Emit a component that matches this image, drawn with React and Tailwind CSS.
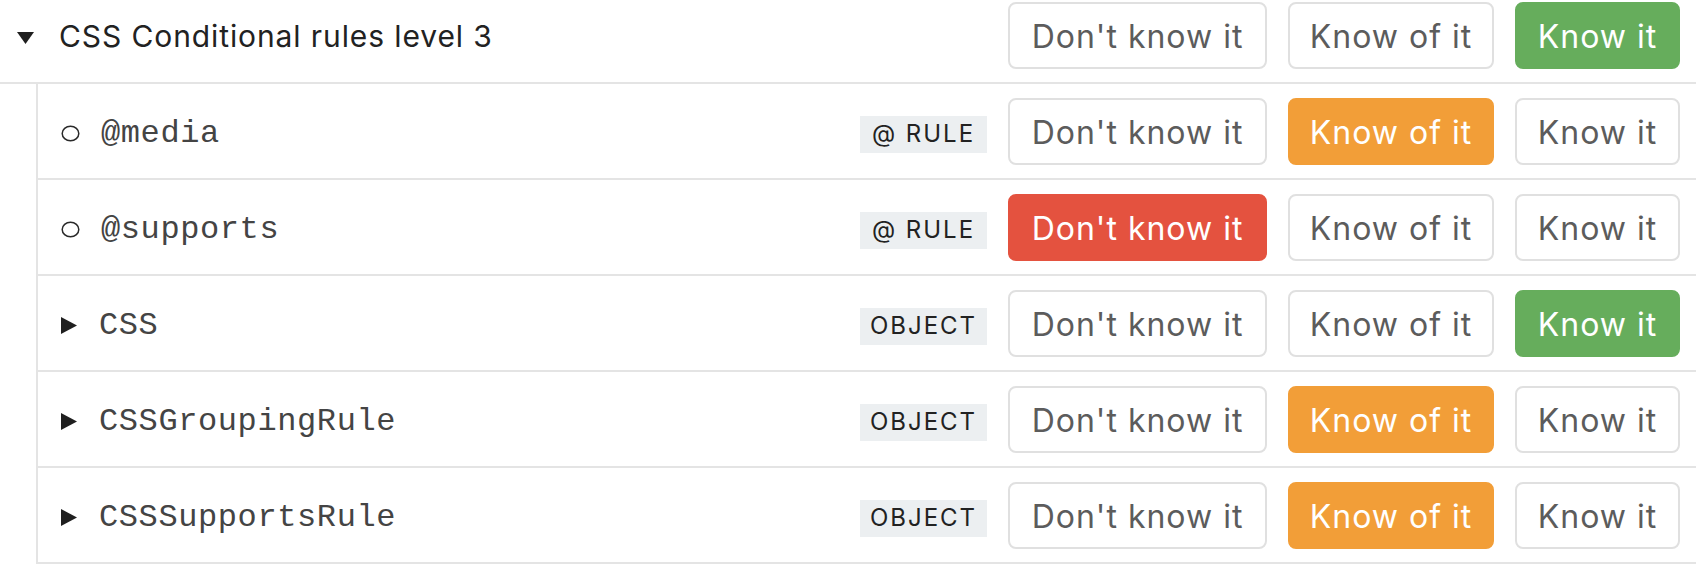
import React from 'react';

const rows = [
  { name: '@media', kind: 'leaf', tag: '@ RULE', state: 'of' },
  { name: '@supports', kind: 'leaf', tag: '@ RULE', state: 'dont' },
  { name: 'CSS', kind: 'closed', tag: 'OBJECT', state: 'know' },
  { name: 'CSSGroupingRule', kind: 'closed', tag: 'OBJECT', state: 'of' },
  { name: 'CSSSupportsRule', kind: 'closed', tag: 'OBJECT', state: 'of' },
];

const Choices = ({ state }) => {
  const base =
    'h-[67px] pt-[3px] rounded-[8px] border-2 text-[32px] tracking-[1px] flex items-center justify-center';
  const idle = 'border-[#e0e0e0] bg-white text-[#5c5c5c]';
  return (
    <div className="flex items-center gap-[21px]">
      <button className={`${base} w-[259px] ${state === 'dont' ? 'border-[#e4523f] bg-[#e4523f] text-white' : idle}`}>
        Don't know it
      </button>
      <button className={`${base} w-[206px] ${state === 'of' ? 'border-[#f29e38] bg-[#f29e38] text-white' : idle}`}>
        Know of it
      </button>
      <button className={`${base} w-[165px] ${state === 'know' ? 'border-[#66ad5c] bg-[#66ad5c] text-white' : idle}`}>
        Know it
      </button>
    </div>
  );
};

const Marker = ({ kind }) =>
  kind === 'leaf' ? (
    <svg width="19" height="17" viewBox="0 0 19 17" className="shrink-0 mt-[4px]">
      <ellipse cx="9.5" cy="8.5" rx="8.3" ry="7.2" fill="none" stroke="#2a2a2a" strokeWidth="1.5" />
    </svg>
  ) : (
    <svg width="17" height="17" viewBox="0 0 17 17" className="shrink-0 mt-[4px]">
      <polygon points="0,0 16,8.5 0,17" fill="#1f1f1f" />
    </svg>
  );

export default function App() {
  return (
    <div className="w-[1696px] h-[564px] bg-white font-['Inter',sans-serif] overflow-hidden">
      <div className="h-[84px] flex items-center pt-[2px] pb-[14px] pl-[17px] pr-[16px] border-b-2 border-[#e4e4e4]">
        <svg width="17" height="12" viewBox="0 0 17 12" className="shrink-0 mt-[6px]">
          <polygon points="0,0 17,0 8.5,12" fill="#1f1f1f" />
        </svg>
        <div className="ml-[25px] flex-1 pt-[3px] text-[30px] tracking-[0.9px] text-[#222]">
          CSS Conditional rules level 3
        </div>
        <Choices state="know" />
      </div>
      <div className="ml-[36px] border-l-2 border-[#e4e4e4]">
        {rows.map((r) => (
          <div key={r.name} className="h-[96px] flex items-center border-b-2 border-[#e4e4e4] pl-[23px] pr-[16px]">
            <Marker kind={r.kind} />
            <div className="ml-[21px] mt-[5px] flex-1 font-['Liberation_Mono',monospace] text-[32px] tracking-[0.6px] text-[#444]">
              {r.name}
            </div>
            <span className="mt-[6px] mr-[21px] h-[37px] w-[127px] flex items-center justify-center bg-[#eceff1] text-[24px] tracking-[2px] text-[#222]">
              {r.tag}
            </span>
            <Choices state={r.state} />
          </div>
        ))}
      </div>
    </div>
  );
}
